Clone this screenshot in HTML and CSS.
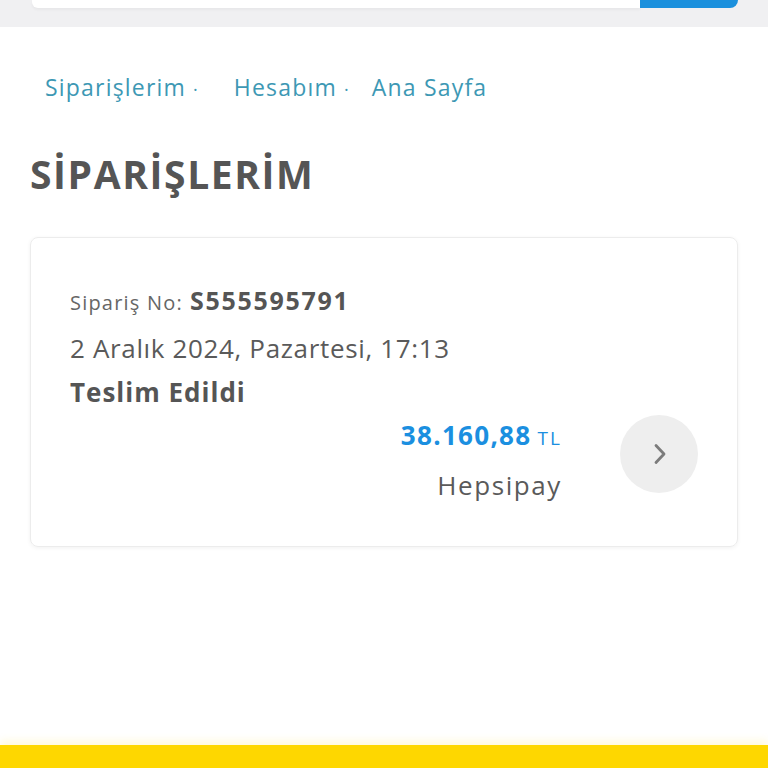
FILE: index.html
```html
<!DOCTYPE html>
<html lang="tr">
<head>
<meta charset="utf-8">
<link rel="stylesheet" href="styles.css">
</head>
<body>
<div class="topbar">
  <div class="search">
    <div class="search-input"></div>
    <div class="search-btn"></div>
  </div>
</div>
<main class="content">
  <nav class="crumbs">
    <a class="crumb c1">Siparişlerim<span class="dot">·</span></a>
    <a class="crumb c2">Hesabım<span class="dot">·</span></a>
    <a class="crumb c3">Ana Sayfa</a>
  </nav>
  <h1 class="title">SİPARİŞLERİM</h1>
  <section class="card">
    <div class="info">
      <div class="order-no"><span class="label">Sipariş No:</span> <span class="num">S555595791</span></div>
      <div class="date">2 Aralık 2024, Pazartesi, 17:13</div>
      <div class="status">Teslim Edildi</div>
      <div class="bottom">
        <div class="pay">
          <div class="price"><span class="amount">38.160,88</span> <span class="cur">TL</span></div>
          <div class="method">Hepsipay</div>
        </div>
        <div class="arrow">
          <svg width="24" height="24" viewBox="0 0 24 24"><path d="M9 3.5 L17 12 L9 20.5" fill="none" stroke="#7b7b7b" stroke-width="2.8" stroke-linecap="round" stroke-linejoin="round"/></svg>
        </div>
      </div>
    </div>
  </section>
</main>
<div class="footer-bar"></div>
</body>
</html>
```
FILE: styles.css
```css
* { box-sizing: border-box; }
html, body { margin: 0; padding: 0; background: #fff; height: 768px; overflow: hidden; }
body { font-family: "Open Sans", "DejaVu Sans", sans-serif; color: #555; position: relative; }
.topbar { height: 27px; background: #f0f0f2; padding: 0 30px 0 32px; }
.search { display: flex; height: 8px; }
.search-input { flex: 1; background: #fff; border-radius: 0 0 0 6px; box-shadow: 0 2px 3px rgba(0,0,0,0.04); }
.search-btn { width: 98px; background: #1b90dd; border-radius: 0 0 10px 0; }
.content { padding: 0 30px; }
.crumbs { display: flex; align-items: baseline; padding-top: 44px; padding-left: 15px; height: 88px; font-size: 23px; color: #3d98b4; }
.crumb { color: #3d98b4; text-decoration: none; letter-spacing: 1.2px; }
.dot { margin-left: 7px; font-size: 18px; letter-spacing: 0; }
.c1 { margin-right: 36px; }
.c2 { margin-right: 23px; }
.title { margin: 35px 0 0; font-size: 39px; font-weight: 700; letter-spacing: 1.6px; color: #555; line-height: 48px; height: 48px; }
.card { margin-top: 39px; height: 310px; border: 1px solid #ececec; border-radius: 8px; box-shadow: 0 1px 4px rgba(0,0,0,0.06); padding: 44px 39px 0 39px; }
.order-no { line-height: 36px; }
.label { font-size: 20px; color: #666; letter-spacing: 1.2px; }
.num { font-size: 25px; font-weight: 700; color: #555; letter-spacing: 1.7px; margin-left: 3px; }
.date { font-size: 26px; line-height: 40px; margin-top: 6px; color: #5a5a5a; letter-spacing: 0.65px; }
.status { font-size: 26px; font-weight: 700; line-height: 40px; margin-top: 4px; color: #555; letter-spacing: 1px; }
.bottom { display: flex; justify-content: flex-end; align-items: center; }
.pay { text-align: right; margin-right: 58px; }
.price { line-height: 46px; }
.amount { font-size: 26px; font-weight: 700; color: #1b8fe0; letter-spacing: 1.3px; }
.cur { font-size: 19px; color: #1b8fe0; letter-spacing: 2px; margin-left: 2px; }
.method { font-size: 26px; line-height: 46px; color: #5a5a5a; letter-spacing: 1.6px; }
.arrow { width: 78px; height: 78px; margin-bottom: 12px; border-radius: 50%; background: #eeeeee; display: flex; align-items: center; justify-content: center; }
.footer-bar { position: absolute; left: 0; right: 0; bottom: 0; height: 23px; background: #fed700; box-shadow: 0 -4px 8px rgba(254,215,0,0.15); }
```
